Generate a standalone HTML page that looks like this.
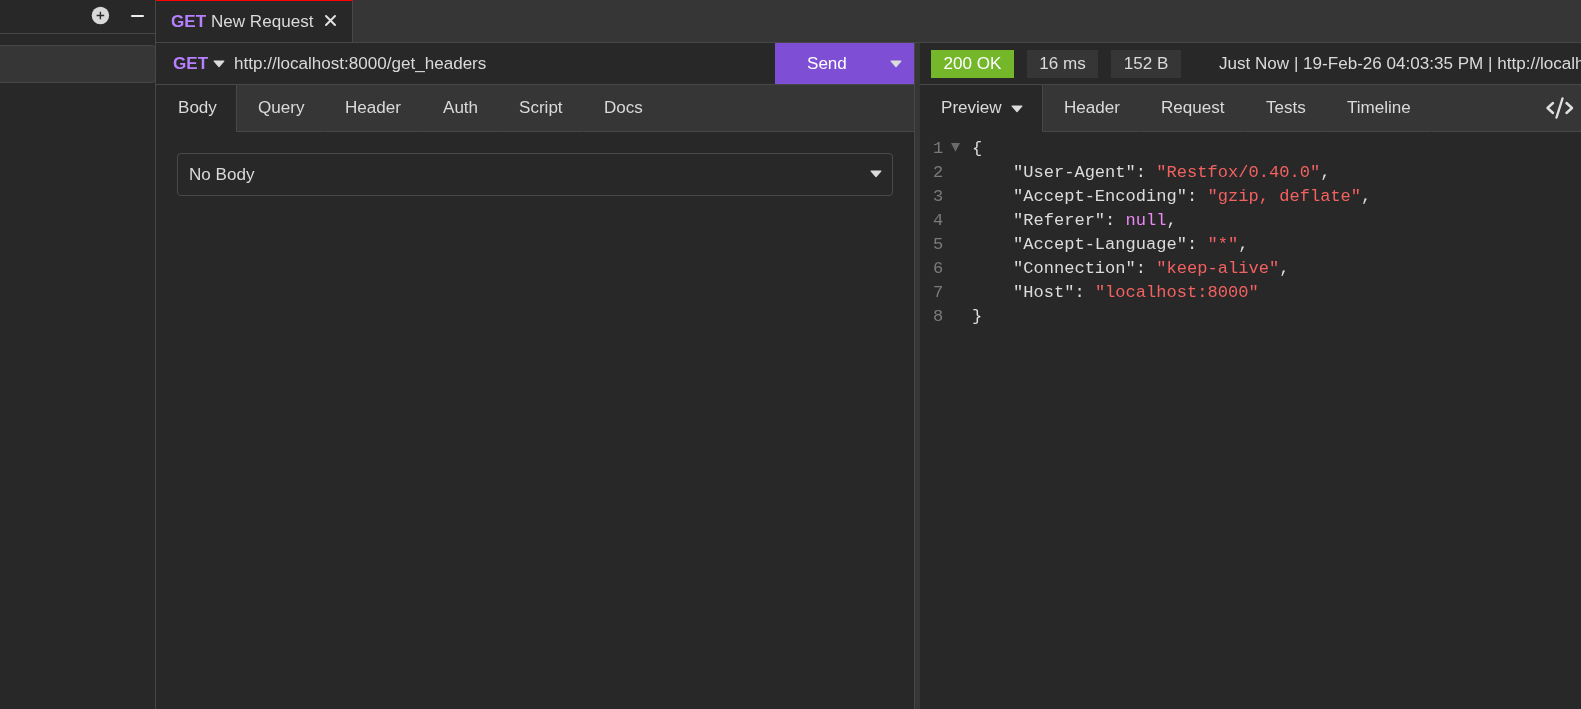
<!DOCTYPE html>
<html><head><meta charset="utf-8">
<style>
*{box-sizing:border-box;margin:0;padding:0}
html,body{width:1581px;height:709px;overflow:hidden;background:#282828;font-family:"Liberation Sans",sans-serif;font-size:17.07px;color:#dadada}
.abs{position:absolute}
.sidebar{left:0;top:0;width:155px;height:709px;background:#282828}
.vline{background:#474747}
.hline{background:#474747}
.tabbar{left:156px;top:0;width:1425px;height:42px;background:#363636}
.tab{left:156px;top:0;width:197px;height:42px;background:#282828;border-top:1px solid #f00;border-right:1px solid #474747}
.t{position:absolute;will-change:transform;white-space:pre;line-height:20px;height:20px}
.purple{color:#b780ff;font-weight:bold}
.send{left:775px;top:43px;width:139px;height:41px;background:#7e4fd5}
.tri{position:absolute;width:0;height:0;border-left:5.5px solid transparent;border-right:5.5px solid transparent;border-top:6.5px solid #ddd}
.rtabs{background:#363636}
.badge{position:absolute;will-change:transform;top:50px;height:28px;line-height:28px;text-align:center;white-space:pre}
.code{position:absolute;will-change:transform;font-family:"Liberation Mono",monospace;font-size:17.07px;line-height:24px;white-space:pre;color:#dcdcdc}
.ln{color:#7a7a7a}
.s{color:#f36161}
.n{color:#ec87f4}
</style></head><body>
<!-- sidebar -->
<div class="abs sidebar"></div>
<div class="abs hline" style="left:0;top:33px;width:155px;height:1px"></div>
<svg class="abs" style="left:88px;top:3px" width="26" height="26" viewBox="0 0 26 26"><circle cx="12.4" cy="12.5" r="8.7" fill="#d9d9d9"/><path d="M8.6 12.5H16.2M12.4 8.8V16.2" stroke="#2a2a2a" stroke-width="1.4"/></svg>
<div class="abs" style="left:131px;top:15px;width:13px;height:2px;background:#eee;border-radius:1px"></div>
<div class="abs" style="left:-5px;top:45px;width:161px;height:38px;background:#363636;border:1px solid #474747;border-radius:4px"></div>
<div class="abs vline" style="left:155px;top:0;width:1px;height:709px"></div>

<!-- tab bar -->
<div class="abs tabbar"></div>
<div class="abs hline" style="left:156px;top:42px;width:1425px;height:1px"></div>
<div class="abs tab"></div>
<div class="t purple" style="left:171px;top:12px">GET</div>
<div class="t" style="left:211px;top:12px">New Request</div>
<svg class="abs" style="left:323px;top:13px" width="15" height="15" viewBox="0 0 15 15"><path d="M3 3L12 12M12 3L3 12" stroke="#e2e2e2" stroke-width="2" stroke-linecap="round"/></svg>

<!-- request URL row -->
<div class="t purple" style="left:173px;top:54px">GET</div>
<svg class="abs" style="left:212.5px;top:59.5px" width="12" height="8" viewBox="0 0 12 8"><path d="M1.2 1.1H10.8L6 6.5Z" fill="#dcdcdc" stroke="#dcdcdc" stroke-width="1.3" stroke-linejoin="round"/></svg>
<div class="t" style="left:233.5px;top:54px">http://localhost:8000/get_headers</div>
<div class="abs send"></div>
<div class="t" style="left:806.5px;top:54px;color:#fff">Send</div>
<svg class="abs" style="left:890.2px;top:59.6px" width="12" height="8" viewBox="0 0 12 8"><path d="M1.2 1.1H10.8L6 6.5Z" fill="#dcdcdc" stroke="#dcdcdc" stroke-width="1.3" stroke-linejoin="round"/></svg>
<div class="abs hline" style="left:156px;top:84px;width:758px;height:1px"></div>

<!-- request tabs -->
<div class="abs" style="left:235.5px;top:85px;width:678.5px;height:47px;background:#363636;border-left:1px solid #474747;border-bottom:1px solid #474747"></div>
<div class="t" style="left:177.6px;top:98px">Body</div>
<div class="t" style="left:257.6px;top:98px">Query</div>
<div class="t" style="left:345.4px;top:98px">Header</div>
<div class="t" style="left:442.6px;top:98px">Auth</div>
<div class="t" style="left:519.4px;top:98px">Script</div>
<div class="t" style="left:604.4px;top:98px">Docs</div>

<!-- no body select -->
<div class="abs" style="left:177px;top:153px;width:716px;height:43px;border:1px solid #4a4a4a;border-radius:4px"></div>
<div class="t" style="left:188.5px;top:165px">No Body</div>
<svg class="abs" style="left:870.2px;top:170px" width="12" height="8" viewBox="0 0 12 8"><path d="M1.2 1.1H10.8L6 6.5Z" fill="#dcdcdc" stroke="#dcdcdc" stroke-width="1.3" stroke-linejoin="round"/></svg>

<!-- divider -->
<div class="abs" style="left:914px;top:43px;width:6px;height:666px;background:#363636;border-left:1px solid #474747"></div>

<!-- response bar -->
<div class="badge" style="left:931px;width:83px;background:#74b72a;color:#fff">200 OK</div>
<div class="badge" style="left:1027px;width:71px;background:#363636">16 ms</div>
<div class="badge" style="left:1111px;width:70px;background:#363636">152 B</div>
<div class="t" style="left:1218.5px;top:54px">Just Now | 19-Feb-26 04:03:35 PM | http://localhost:8000/get_headers</div>
<div class="abs hline" style="left:920px;top:84px;width:661px;height:1px"></div>

<!-- response tabs -->
<div class="abs" style="left:1042px;top:85px;width:539px;height:47px;background:#363636;border-left:1px solid #474747;border-bottom:1px solid #474747"></div>
<div class="t" style="left:941px;top:98px">Preview</div>
<svg class="abs" style="left:1010.6px;top:104.8px" width="12" height="8" viewBox="0 0 12 8"><path d="M1.2 1.1H10.8L6 6.5Z" fill="#dcdcdc" stroke="#dcdcdc" stroke-width="1.3" stroke-linejoin="round"/></svg>
<div class="t" style="left:1063.6px;top:98px">Header</div>
<div class="t" style="left:1161px;top:98px">Request</div>
<div class="t" style="left:1266px;top:98px">Tests</div>
<div class="t" style="left:1347px;top:98px">Timeline</div>
<svg class="abs" style="left:1544px;top:96px" width="32" height="24" viewBox="0 0 32 24"><path d="M9 7L3.5 12L9 17M22.5 7L28 12L22.5 17M18.5 2.5L12.5 21.5" fill="none" stroke="#e0e0e0" stroke-width="2.4" stroke-linecap="round" stroke-linejoin="round"/></svg>

<!-- gaps -->
<div class="abs" style="left:324px;top:131px;width:1px;height:1px;background:#3a3a3a"></div><div class="abs" style="left:421px;top:131px;width:1px;height:1px;background:#3a3a3a"></div><div class="abs" style="left:498px;top:131px;width:1px;height:1px;background:#3a3a3a"></div><div class="abs" style="left:583px;top:131px;width:1px;height:1px;background:#3a3a3a"></div><div class="abs" style="left:1139px;top:131px;width:1px;height:1px;background:#3a3a3a"></div><div class="abs" style="left:1244px;top:131px;width:1px;height:1px;background:#3a3a3a"></div><div class="abs" style="left:1325px;top:131px;width:1px;height:1px;background:#3a3a3a"></div><div class="abs" style="left:1431px;top:131px;width:1px;height:1px;background:#3a3a3a"></div>
<!-- code -->
<div class="code" style="left:932.8px;top:136.5px"><span class="ln">1</span>
<span class="ln">2</span>
<span class="ln">3</span>
<span class="ln">4</span>
<span class="ln">5</span>
<span class="ln">6</span>
<span class="ln">7</span>
<span class="ln">8</span></div>
<svg class="abs" style="left:950px;top:142px" width="11" height="10" viewBox="0 0 11 10"><path d="M1 1H10L5.5 9.8Z" fill="#6a6a6a"/></svg>
<div class="code" style="left:971.8px;top:136.5px">{
    "User-Agent": <span class="s">"Restfox/0.40.0"</span>,
    "Accept-Encoding": <span class="s">"gzip, deflate"</span>,
    "Referer": <span class="n">null</span>,
    "Accept-Language": <span class="s">"*"</span>,
    "Connection": <span class="s">"keep-alive"</span>,
    "Host": <span class="s">"localhost:8000"</span>
}</div>
</body></html>
